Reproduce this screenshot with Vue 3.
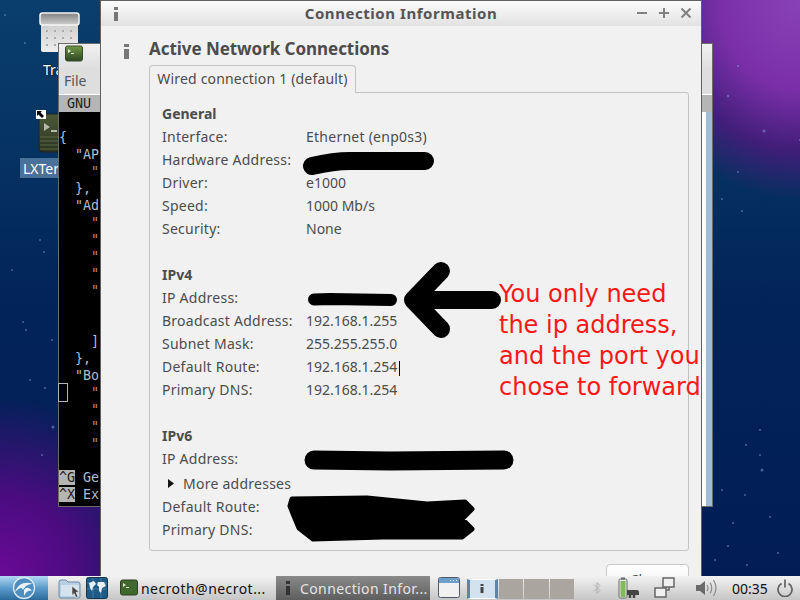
<script setup>
const termLines = [
  { t: '', c: '' }, { t: '{', c: 'tb' }, { t: '  "AP', c: 'tb' }, { t: '    "', c: 'tq' }, { t: '  },', c: 'tb' },
  { t: '  "Ad', c: 'tb' }, { t: '    "', c: 'tq' }, { t: '    "', c: 'tq' }, { t: '    "', c: 'tq' }, { t: '    "', c: 'tq' }, { t: '    "', c: 'tq' },
  { t: '', c: '' }, { t: '', c: '' }, { t: '    ]', c: 'tb' }, { t: '  },', c: 'tb' }, { t: '  "Bo', c: 'tb' },
  { t: '    "', c: 'tq' }, { t: '    "', c: 'tq' }, { t: '    "', c: 'tq' }, { t: '    "', c: 'tq' }, { t: '', c: '' },
]
const sections = [
  { title: 'General', rows: [
    ['Interface:', 'Ethernet (enp0s3)', true], ['Hardware Address:', ''], ['Driver:', 'e1000'], ['Speed:', '1000 Mb/s'], ['Security:', 'None'],
  ] },
  { title: 'IPv4', rows: [
    ['IP Address:', ''], ['Broadcast Address:', '192.168.1.255'], ['Subnet Mask:', '255.255.255.0'], ['Default Route:', '192.168.1.254'], ['Primary DNS:', '192.168.1.254'],
  ] },
]
const stars = [
  [5,15,1],[25,43,1],[60,40,1],[110,60,1],[40,240,1],[12,270,1],[44,252,1],[23,322,1],[26,330,1],[30,380,1],[45,388,1],[52,340,1],[53,427,1.5],[42,455,1],
  [764,131,1.5],[738,172,1],[742,211,1],[722,199,1],[728,96,1.2],[738,66,1],[800,140,1],[762,470,1.5],[760,430,1],[746,445,1],[733,523,1],[745,495,1],[778,553,1],[728,546,1],[747,565,1],[770,517,1],[722,490,1],[760,455,1],[715,560,1]
]
</script>

<template>
  <div class="screen">
    <div class="desktop">
      <svg class="stars" width="800" height="576" viewBox="0 0 800 576">
        <circle v-for="(s, i) in stars" :key="i" :cx="s[0]" :cy="s[1]" :r="s[2]" fill="#7f9fd8" opacity="0.55" />
      </svg>

      <div class="desk-icon trash">
        <svg width="42" height="42" viewBox="0 0 42 42">
          <defs>
            <linearGradient id="tr1" x1="0" y1="0" x2="0" y2="1"><stop offset="0" stop-color="#808080" /><stop offset="1" stop-color="#cfcfcf" /></linearGradient>
            <linearGradient id="tr2" x1="0" y1="0" x2="0" y2="1"><stop offset="0" stop-color="#cfcfcf" /><stop offset="1" stop-color="#eeeeee" /></linearGradient>
          </defs>
          <rect x="2" y="12" width="37" height="28" rx="2" fill="url(#tr2)" />
          <rect x="1" y="1" width="39" height="12" rx="2.5" fill="url(#tr1)" stroke="#f5f5f5" stroke-width="1.5" />
          <g fill="#aaa">
            <rect x="7" y="18" width="2" height="2" /><rect x="15" y="18" width="2" height="2" /><rect x="23" y="18" width="2" height="2" /><rect x="31" y="18" width="2" height="2" />
            <rect x="7" y="25" width="2" height="2" /><rect x="15" y="25" width="2" height="2" /><rect x="23" y="25" width="2" height="2" /><rect x="31" y="25" width="2" height="2" />
            <rect x="7" y="32" width="2" height="2" /><rect x="15" y="32" width="2" height="2" /><rect x="23" y="32" width="2" height="2" /><rect x="31" y="32" width="2" height="2" />
          </g>
        </svg>
        <span class="trash-label">Trash</span>
      </div>

      <div class="desk-icon lxt">
        <svg width="40" height="40" viewBox="0 0 40 40">
          <defs>
            <linearGradient id="lx" x1="0" y1="0" x2="0" y2="1"><stop offset="0" stop-color="#4c5a38" /><stop offset="1" stop-color="#2b3320" /></linearGradient>
          </defs>
          <rect x="1" y="1" width="38" height="38" rx="4" fill="url(#lx)" stroke="#222" />
          <path d="M6 10l6 4-6 4zM13 17h6v2h-6z" fill="#b5baa8" />
          <g stroke="#5a6a46" stroke-width="1"><path d="M2 24h36M2 28h36M2 32h36M2 36h36" /></g>
        </svg>
        <svg class="emblem" width="10" height="9" viewBox="0 0 10 9">
          <rect width="10" height="9" fill="#fff" />
          <path d="M1 1h5l-1.5 1.5L8 6 6 8 2.500 4.500 1 6z" fill="#000" />
        </svg>
        <span class="lxt-label">LXTerminal</span>
      </div>

      <section class="terminal">
        <header class="t-title">
          <svg width="18" height="18" viewBox="0 0 18 18">
            <defs>
              <linearGradient id="tg" x1="0" y1="0" x2="0" y2="1"><stop offset="0" stop-color="#6f9a46" /><stop offset="1" stop-color="#2e4420" /></linearGradient>
            </defs>
            <rect x="0.500" y="1" width="17" height="15" rx="2" fill="url(#tg)" stroke="#3a4a2c" />
            <path d="M3 4l3 2-3 2zM6 8h3v1H6z" fill="#dfe8d0" />
          </svg>
        </header>
        <div class="t-menu">File</div>
        <div class="t-body">
          <div class="t-rule"></div>
          <div class="t-nano">  GNU</div>
          <div class="t-main">
            <div class="t-text">
              <div v-for="(l, i) in termLines" :key="i" class="t-line" :class="l.c">{{ l.t }}</div>
              <div class="t-cursor"></div>
              <div class="t-line"><span class="t-key">^G</span><span class="tb"> Ge</span></div>
              <div class="t-line"><span class="t-key">^X</span><span class="tb"> Ex</span></div>
            </div>
            <div class="t-scroll"><div class="t-thumb"></div></div>
          </div>
        </div>
      </section>

      <section class="dialog">
        <header class="d-title">
          <svg class="d-i" width="6" height="14" viewBox="0 0 6 14">
            <rect x="1" y="0" width="4" height="3" fill="#777" /><rect x="1" y="5" width="4" height="9" fill="#777" />
          </svg>
          <span class="d-name">Connection Information</span>
          <div class="d-btns">
            <svg width="12" height="12" viewBox="0 0 12 12"><path d="M1 6h10" stroke="#808080" stroke-width="2" /></svg>
            <svg width="12" height="12" viewBox="0 0 12 12"><path d="M1 6h10M6 1v10" stroke="#808080" stroke-width="2" /></svg>
            <svg width="12" height="12" viewBox="0 0 12 12"><path d="M1.500 1.500l9 9M10.500 1.500l-9 9" stroke="#808080" stroke-width="2" /></svg>
          </div>
        </header>
        <div class="d-body">
          <div class="d-head">
            <svg class="big-i" width="7" height="15" viewBox="0 0 7 15">
              <rect x="1" y="0" width="5" height="3" fill="#777" /><rect x="1" y="5" width="5" height="10" fill="#777" />
            </svg>
            <h1>Active Network Connections</h1>
          </div>
          <div class="tab-wrap">
            <div class="tab">Wired connection 1 (default)</div>
          </div>
          <div class="frame">
            <div v-for="sec in sections" :key="sec.title" class="sec">
              <div class="row sec-title">{{ sec.title }}</div>
              <div v-for="r in sec.rows" :key="r[0]" class="row">
                <span class="lab">{{ r[0] }}</span><span class="val" :class="{ spaced: r[2] }">{{ r[1] }}</span>
              </div>
            </div>
            <div class="sec">
              <div class="row sec-title">IPv6</div>
              <div class="row"><span class="lab">IP Address:</span></div>
              <div class="row more">
                <svg width="6" height="9" viewBox="0 0 6 9"><path d="M0 0l6 4.500L0 9z" fill="#111" /></svg>
                <span>More addresses</span>
              </div>
              <div class="row"><span class="lab">Default Route:</span></div>
              <div class="row"><span class="lab">Primary DNS:</span></div>
            </div>
          </div>
          <div class="d-actions"><button class="close">Close</button></div>
        </div>

        <svg class="marks" width="600" height="576" viewBox="101 0 600 576">
          <path d="M312 165C325 162 335 160 350 160L425 160" fill="none" stroke="#000" stroke-width="18" stroke-linecap="round" />
          <path d="M314 298.500L330 298L391 299" fill="none" stroke="#000" stroke-width="12" stroke-linecap="round" />
          <path d="M492 299H413M441 270L413 299L441 328" fill="none" stroke="#000" stroke-width="18" stroke-linecap="round" stroke-linejoin="round" />
          <path d="M314 459L390 460L504 459" fill="none" stroke="#000" stroke-width="19" stroke-linecap="round" />
          <path d="M292 498L367 497L427 503L465 501L472 508L462 518L472 528L462 536L383 536L313 538L299 527L294 515L290 505Z" fill="#000" stroke="#000" stroke-width="5" stroke-linejoin="round" />
          <path d="M399.500 360V375" stroke="#000" stroke-width="1" />
        </svg>
        <div class="note">You only need<br />the ip address,<br />and the port you<br />chose to forward</div>
      </section>
    </div>

    <footer class="panel">
      <div class="start">
        <svg width="24" height="24" viewBox="0 0 24 24">
          <circle cx="12" cy="12" r="10.500" fill="#4f8fc0" stroke="#dbe9f4" stroke-width="1.300" />
          <path d="M3 16C6 8 13 5 21 8C16 8 13 10 11 14C10 11 8 11 3 16Z M12 14C14 11 17 11 20 15C17 14 14 15 12 20Z" fill="#e8f2f8" />
        </svg>
      </div>
      <div class="launch">
        <svg width="23" height="22" viewBox="0 0 23 22">
          <path d="M1 5q0-2 2-2h5l2 2h10q2 0 2 2v13q0 1-2 1H3q-2 0-2-2z" fill="#b9d0e4" stroke="#6a8aa8" />
          <path d="M3 8h18v11H3z" fill="#d5e3ef" />
          <path d="M14 9l7 6-3 .5 2 4-2 1-2-4-2 2z" fill="#444" stroke="#eee" stroke-width="0.600" />
        </svg>
        <svg width="22" height="22" viewBox="0 0 22 22">
          <rect x="0.500" y="0.500" width="21" height="21" rx="2" fill="#1d5a86" stroke="#16344c" />
          <path d="M1 6h20M1 12h20M7 1v20M15 1v20" stroke="#5e93b8" stroke-width="0.600" />
          <path d="M3 6l5-2 2 3-3 3-1 4-2-3zM12 5l6 0 2 4-4 2-1 5-2-2 0-4-2-2z" fill="#e6eef4" />
        </svg>
      </div>
      <div class="task">
        <svg width="18" height="18" viewBox="0 0 18 18">
          <rect x="0.500" y="1" width="17" height="15" rx="2" fill="#41682c" stroke="#2f3f24" />
          <path d="M3 4l3 2-3 2zM6 8h3v1H6z" fill="#dfe8d0" />
        </svg>
        <span>necroth@necrot...</span>
      </div>
      <div class="task active">
        <svg width="6" height="14" viewBox="0 0 6 14">
          <rect x="1" y="0" width="4" height="3" fill="#333" /><rect x="1" y="5" width="4" height="9" fill="#333" />
        </svg>
        <span>Connection Infor...</span>
      </div>
      <div class="showdesk">
        <svg width="22" height="22" viewBox="0 0 22 22">
          <rect x="0.500" y="0.500" width="21" height="20" rx="2" fill="#f1f1f1" stroke="#505a66" />
          <rect x="1" y="1" width="20" height="5" fill="#6d9fcc" />
          <path d="M12 3.500h1M15 3.500h1M18 3.500h1" stroke="#fff" />
        </svg>
      </div>
      <div class="pager">
        <div class="pg cur">
          <svg width="4" height="9" viewBox="0 0 4 9"><rect x="0.500" y="0" width="3" height="2" fill="#444" /><rect x="0.500" y="3" width="3" height="6" fill="#444" /></svg>
        </div>
        <div class="pg"></div><div class="pg"></div><div class="pg"></div>
      </div>
      <div class="tray">
        <svg class="bt" width="8" height="14" viewBox="0 0 8 14"><path d="M1 3.500l6 6L4 12.500V1.500l3 3-6 6" fill="none" stroke="#b0b0b0" stroke-width="1" /></svg>
        <svg class="bat" width="22" height="22" viewBox="0 0 22 22">
          <rect x="1" y="2" width="8" height="19" rx="1.500" fill="#e8e8e8" stroke="#666" />
          <rect x="3" y="0.500" width="4" height="2" fill="#666" />
          <rect x="2.500" y="4" width="5" height="16" fill="#82b95a" />
          <path d="M9 13h10q2 0 2 3v2H9z" fill="#444" />
          <path d="M12 16v5M16 16v5" stroke="#444" stroke-width="2.500" />
        </svg>
        <svg class="net" width="21" height="22" viewBox="0 0 21 22">
          <rect x="9" y="1" width="11" height="9" fill="#f0f0f0" stroke="#666" stroke-width="1.500" />
          <rect x="1" y="11" width="11" height="9" fill="#f0f0f0" stroke="#666" stroke-width="1.500" />
          <path d="M12 13h3v-3" fill="none" stroke="#666" stroke-width="1.500" />
        </svg>
        <svg class="vol" width="21" height="18" viewBox="0 0 21 18">
          <path d="M0 6h4l5-4v14l-5-4H0z" fill="#6a6a6a" />
          <path d="M11 6q2 3 0 6M14 3.500q3.500 5.500 0 11M17.500 1q5 8 0 16" fill="none" stroke="#8a8a8a" stroke-width="1.200" />
        </svg>
        <span class="clock">00:35</span>
        <svg class="pow" width="18" height="18" viewBox="0 0 17 18">
          <path d="M5 4.500a7 7 0 1 0 7 0" fill="none" stroke="#606060" stroke-width="1.700" />
          <path d="M8.500 0.500v8" stroke="#606060" stroke-width="1.700" />
        </svg>
      </div>
    </footer>
  </div>
</template>

<style>
html, body { margin: 0; background: #000; }
</style>

<style scoped>
.screen {
  width: 800px;
  height: 600px;
  display: flex;
  flex-direction: column;
  overflow: hidden;
  font-family: "Noto Sans", "Open Sans", sans-serif;
}
.desktop {
  position: relative;
  height: 576px;
  flex: none;
  overflow: hidden;
  background:
    radial-gradient(ellipse 180px 200px at 100% 0%, #8a42b8 0%, #7a2fa8 45%, rgba(90, 20, 130, 0.7) 75%, rgba(40, 10, 90, 0) 100%),
    radial-gradient(ellipse 170px 180px at 0% 100%, #6a0a96 0%, #4a0c80 45%, rgba(40, 10, 100, 0) 100%),
    linear-gradient(180deg, #0a3e6c 0%, #063462 25%, #02245a 50%, #021d56 100%);
}
.stars { position: absolute; left: 0; top: 0; }

.desk-icon { position: absolute; }
.trash { left: 39px; top: 12px; width: 42px; height: 80px; }
.trash-label {
  position: absolute; left: 4px; top: 48px; color: #fff; font-size: 14px;
  text-shadow: 0 0 2px #000;
}
.lxt { left: 38px; top: 113px; width: 40px; }
.emblem { position: absolute; left: -2px; top: -3px; }
.lxt-label {
  position: absolute; left: -18px; top: 45px; width: 90px; height: 20px; line-height: 21px;
  padding-left: 3px; background: rgba(130, 165, 200, 0.55); color: #fff; font-size: 14px;
}

.terminal {
  position: absolute; left: 58px; top: 43px; width: 653px; height: 462px;
  border: 1px solid #6b6b6b; background: #eee;
  display: flex; flex-direction: column;
}
.t-title { height: 24px; padding: 1px 0 0 6px; background: linear-gradient(180deg, #f0f0f0, #dedede); }
.t-menu { height: 25px; padding-left: 5px; line-height: 24px; font-size: 14px; color: #555; background: #dedede; }
.t-body { flex: 1; display: flex; flex-direction: column; min-height: 0; font-family: "DejaVu Sans Mono", monospace; font-size: 13.330px; white-space: pre; }
.t-rule { height: 1px; background: #fff; }
.t-nano { height: 17px; line-height: 17px; background: #b5b5b5; color: #222; }
.t-main { flex: 1; display: flex; min-height: 0; }
.t-text { flex: 1; position: relative; background: #000; }
.t-line { height: 17px; line-height: 17px; }
.tb { color: #aebccc; }
.tq { color: #b89070; }
.t-key { background: #b5b5b5; color: #222; }
.t-cursor { position: absolute; left: -1px; top: 271px; width: 8px; height: 17px; border: 1px solid #b5b5b5; }
.t-scroll { width: 12px; background: #fff; padding-left: 6px; box-sizing: border-box; }
.t-thumb { height: 100%; background: #a0bcd8; }

.dialog {
  position: absolute; left: 100px; top: 0; width: 600px; height: 576px;
  border: 1px solid #606060; border-bottom: 0; background: #f1f1f1;
  display: flex; flex-direction: column;
}
.d-title {
  position: relative; height: 25px; box-sizing: border-box; padding-bottom: 2px; flex: none; display: flex; align-items: center; justify-content: center;
  background: linear-gradient(180deg, #fbfbfb, #e2e2e2);
}
.d-i { position: absolute; left: 12px; top: 6px; }
.d-name { font-weight: 700; font-size: 15px; color: #555; letter-spacing: 0.55px; }
.d-btns { position: absolute; right: 9px; top: 6px; display: flex; gap: 10px; }
.d-body { flex: 1; padding: 0 12px 0 48px; display: flex; flex-direction: column; min-height: 0; }
.d-head { position: relative; height: 39px; display: flex; align-items: center; flex: none; }
h1 { margin: 5px 0 0; font-size: 17px; font-weight: 700; color: #4c4c4c; letter-spacing: -0.05px; }
.big-i { position: absolute; left: -26px; top: 18px; }
.tab-wrap { display: flex; flex: none; height: 28px; position: relative; z-index: 1; margin-top: 0; }
.tab {
  width: 207px; height: 28px; box-sizing: border-box; border: 1px solid #c4c4c4; border-bottom: 0; border-radius: 4px 4px 0 0;
  background: #f1f1f1; text-align: center; line-height: 26px; font-size: 14px; color: #4c4c4c; letter-spacing: 0.18px;
}
.frame {
  flex: none; height: 459px; box-sizing: border-box; margin-top: -1px; padding: 9px 12px 0;
  border: 1px solid #c4c4c4; border-radius: 0 3px 3px 3px;
  display: flex; flex-direction: column; gap: 23px;
}
.row { height: 23px; line-height: 23px; font-size: 14px; color: #4c4c4c; display: flex; white-space: nowrap; }
.sec-title { font-weight: 700; }
.lab { width: 144px; flex: none; letter-spacing: 0.25px; }
.val { flex: 1; }
.spaced { letter-spacing: 0.25px; }
.more { height: 27px; line-height: 27px; margin-bottom: -2px; align-items: center; gap: 9px; padding-left: 6px; letter-spacing: 0.25px; }
.d-actions { display: flex; justify-content: flex-end; margin-top: 13px; flex: none; }
.close {
  width: 83px; height: 30px; padding: 0; border: 1px solid #c8c8c8; border-radius: 4px; background: linear-gradient(180deg, #fff, #f0f0f0);
  font: 14px "Noto Sans", sans-serif; color: #4c4c4c; margin-right: 0;
}
.marks { position: absolute; left: 0; top: 0; pointer-events: none; }
.note {
  position: absolute; left: 398px; top: 278px; font-family: "DejaVu Sans", sans-serif; font-size: 24px; line-height: 31px; color: #f81818; white-space: nowrap;
}

.panel {
  height: 24px; flex: none; display: flex; align-items: center; position: relative;
  background: linear-gradient(180deg, #f2f2f2, #c6c6c6);
}
.start {
  width: 48px; height: 24px; display: flex; align-items: center; justify-content: center; flex: none;
  background: linear-gradient(180deg, #b3d8f3, #5b9ccb 50%, #2a6a9c);
}
.launch { width: 67px; padding-left: 10px; display: flex; gap: 5px; box-sizing: border-box; margin-right: 0; flex: none; }
.task { height: 24px; display: flex; align-items: center; box-sizing: border-box; font-size: 14px; flex: none; overflow: hidden; white-space: nowrap; }
.task:not(.active) { width: 161px; padding-left: 5px; gap: 3px; color: #111; letter-spacing: 0.45px; }
.active { width: 154px; padding-left: 9px; gap: 9px; color: #e4e4e4; letter-spacing: 0.4px; background: linear-gradient(180deg, #8a8a8a, #5e5e5e); }
.showdesk { width: 37px; padding-left: 8px; box-sizing: border-box; flex: none; display: flex; }
.pager { display: flex; flex: none; height: 20px; width: 107px; gap: 1px; margin-top: 1px; }
.pg { flex: 1; background: #aaa59f; }
.cur {
  background: #d3e2ef; border-left: 3px solid #5e84aa; border-right: 3px solid #5e84aa; border-top: 1px solid #fff; border-bottom: 1px solid #fff;
  display: flex; align-items: center; justify-content: center;
}
.tray { position: relative; flex: 1; display: flex; align-items: center; height: 24px; padding-left: 19px; }
.bt { margin-right: 17px; }
.bat { margin-right: 14px; }
.net { margin-right: 21px; }
.vol { margin-right: 15px; }
.clock { font-size: 14px; color: #111; margin-right: 8px; }
</style>
